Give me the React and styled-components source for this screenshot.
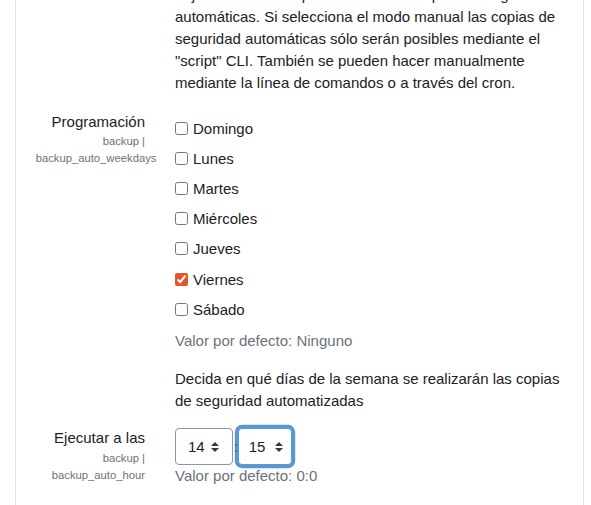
import styled, { createGlobalStyle } from "styled-components";

const GlobalStyle = createGlobalStyle`
  body {
    margin: 0;
    background: #fff;
    color: #1d2125;
    font-family: "Liberation Sans", Arial, sans-serif;
    font-size: 15px;
    overflow: hidden;
  }
`;

const Panel = styled.div`
  box-sizing: border-box;
  width: 569px;
  margin-left: 15px;
  border-left: 1px solid #dee2e6;
  border-right: 1px solid #dee2e6;
  padding: 0 0 60px 19.7px;
`;

const SettingRow = styled.div`
  display: grid;
  grid-template-columns: 109.3px 387.75px;
  column-gap: 30px;
  margin-top: ${(p) => p.$gap || 0}px;
`;

const LabelCol = styled.div`
  text-align: right;
`;

const LabelTitle = styled.div`
  line-height: 22.5px;
`;

const ShortName = styled.div`
  font-size: 11.25px;
  line-height: 1.5;
  color: #6a737b;
`;

const Description = styled.div`
  line-height: 22px;
  margin-top: ${(p) => p.$top || 0}px;
`;

const CheckList = styled.div`
  padding-top: 6px;
  display: flex;
  flex-direction: column;
`;

const CheckRow = styled.label`
  display: flex;
  align-items: center;
  gap: 5px;
  height: 22.5px;
  margin-bottom: 7.72px;
`;

const CheckBox = styled.input`
  width: 13px;
  height: 13px;
  margin: 0;
  accent-color: #e8542a;
`;

const DefaultInfo = styled.div`
  color: #6a737b;
  line-height: 22.5px;
  margin-top: ${(p) => p.$top || 0}px;
`;

const TimeGroup = styled.div`
  display: flex;
  align-items: center;
  margin-top: 1px;
`;

const arrow =
  "data:image/svg+xml;charset=utf8,%3Csvg xmlns='http://www.w3.org/2000/svg' viewBox='0 0 4 5'%3E%3Cpath fill='%23343a40' d='M2 0L0 2h4zm0 5L0 3h4z'/%3E%3C/svg%3E";

const Select = styled.select`
  appearance: none;
  box-sizing: border-box;
  height: 36.5px;
  width: ${(p) => (p.$focused ? 54 : 58.3)}px;
  padding: 0 0 0 ${(p) => (p.$focused ? 9.5 : 12)}px;
  font-family: inherit;
  font-size: 15px;
  color: #1d2125;
  border: 1px solid ${(p) => (p.$focused ? "#5a9ad6" : "#8f959e")};
  border-radius: 4px;
  background: #fff url("${arrow}") no-repeat right ${(p) => (p.$focused ? 8.5 : 13)}px center / 8px 10px;
  box-shadow: ${(p) => (p.$focused ? "0 0 0 3.2px rgba(15, 108, 191, 0.7)" : "none")};
  outline: none;
`;

const Colon = styled.span`
  width: 4.9px;
  text-align: center;
`;

const days = [
  ["Domingo", false],
  ["Lunes", false],
  ["Martes", false],
  ["Miércoles", false],
  ["Jueves", false],
  ["Viernes", true],
  ["Sábado", false],
];

export default function App() {
  return (
    <>
      <GlobalStyle />
      <Panel>
        <SettingRow>
          <LabelCol />
          <Description $top={-16}>
            Elija automatizado para habilitar las copias de seguridad
            automáticas. Si selecciona el modo manual las copias de seguridad
            automáticas sólo serán posibles mediante el "script" CLI. También
            se pueden hacer manualmente mediante la línea de comandos o a
            través del cron.
          </Description>
        </SettingRow>

        <SettingRow $gap={16.75}>
          <LabelCol>
            <LabelTitle>Programación</LabelTitle>
            <ShortName>backup | backup_auto_weekdays</ShortName>
          </LabelCol>
          <div>
            <CheckList>
              {days.map(([name, checked]) => (
                <CheckRow key={name}>
                  <CheckBox type="checkbox" defaultChecked={checked} />
                  {name}
                </CheckRow>
              ))}
            </CheckList>
            <DefaultInfo $top={1.4}>Valor por defecto: Ninguno</DefaultInfo>
            <Description $top={15.75}>
              Decida en qué días de la semana se realizarán las copias de
              seguridad automatizadas
            </Description>
          </div>
        </SettingRow>

        <SettingRow $gap={15.5}>
          <LabelCol>
            <LabelTitle>Ejecutar a las</LabelTitle>
            <ShortName>backup | backup_auto_hour</ShortName>
          </LabelCol>
          <div>
            <TimeGroup>
              <Select defaultValue="14">
                <option value="14">14</option>
              </Select>
              <Colon>:</Colon>
              <Select $focused defaultValue="15">
                <option value="15">15</option>
              </Select>
            </TimeGroup>
            <DefaultInfo>Valor por defecto: 0:0</DefaultInfo>
          </div>
        </SettingRow>
      </Panel>
    </>
  );
}
